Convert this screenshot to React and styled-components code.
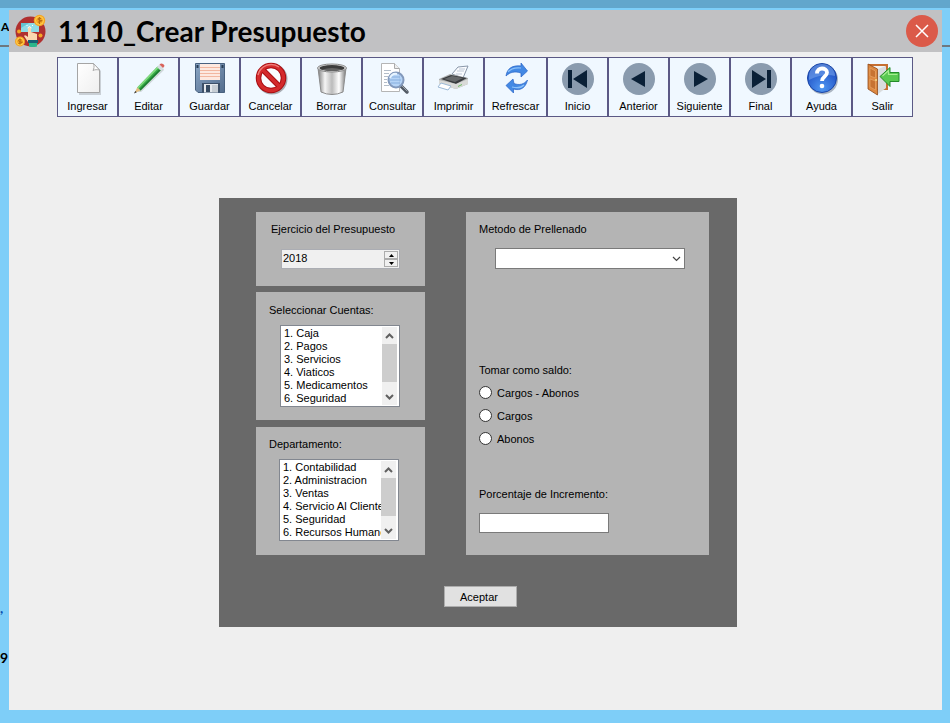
import React from "react";
import styled, { createGlobalStyle } from "styled-components";

const GlobalStyle = createGlobalStyle`
  *, *::before, *::after { box-sizing: border-box; }
  body {
    margin: 0;
    background: #7ecef8;
    color: #000;
    font: 11px/16px "Liberation Sans", Arial, sans-serif;
  }
  button, input, select { font: inherit; color: inherit; margin: 0; }
`;

const Desktop = styled.div`
  display: grid;
  grid-template-columns: 9px minmax(0, 1fr) 8px;
  min-height: 100vh;
  border-top: 8px solid #62a6cc;
  padding: 2px 0 13px;
`;

const Gutter = styled.div`
  display: flex;
  flex-direction: column;
  overflow: hidden;
  font: bold 14px/16px Lato, sans-serif;
`;

const GutterTop = styled.div`
  height: 37px;
  padding: 9px 0 0 1px;
  border-bottom: 2px solid #6d7880;
  font-size: 12px;
`;

const GutterBottom = styled.div`
  display: flex;
  flex-direction: column;
  margin-top: auto;
  padding-bottom: 44px;
`;

const GutterMark = styled.span`
  height: 50px;
  color: #0a4fae;
`;

const Window = styled.main`
  background: #efefef;
`;

const TitleBar = styled.header`
  display: flex;
  align-items: center;
  height: 42px;
  padding: 0 4px 0 5px;
  background: #c1c1c3;
`;

const Title = styled.h1`
  flex: 1;
  margin: 0 0 0 10px;
  font: bold 28px/36px "Century Gothic", Lato, sans-serif;
`;

const CloseButton = styled.button`
  display: flex;
  padding: 0;
  border: 0;
  border-radius: 50%;
  background: none;
`;

const Toolbar = styled.nav`
  display: flex;
  flex-wrap: wrap;
  margin: 5px 24px 0 48px;
`;

const ToolButton = styled.button`
  display: flex;
  flex-direction: column;
  align-items: center;
  gap: 2px;
  width: ${(p) => (p.$wide ? 63 : 61)}px;
  height: 60px;
  padding: 4px 0 0;
  border: 1px solid #5b5985;
  background: #f0f8ff;
  white-space: nowrap;
`;

const Panel = styled.form`
  margin: 81px 205px 0 210px;
  padding: 14px 28px 20px 37px;
  background: #696969;
`;

const Columns = styled.div`
  display: grid;
  grid-template-columns: minmax(0, 169fr) minmax(0, 243fr);
  gap: 41px;
`;

const Stack = styled.div`
  display: flex;
  flex-direction: column;
  gap: 6px;
  > :last-child { margin-top: auto; }
`;

const Box = styled.section`
  display: flex;
  flex-direction: column;
  align-items: stretch;
  padding: ${(p) => p.$pad || "10px 25px 13px 13px"};
  background: #b4b4b4;
`;

const Caption = styled.label`
  display: block;
  white-space: nowrap;
`;

const Spinner = styled.div`
  display: flex;
  height: 20px;
  margin: 12px 0 8px 10px;
  padding: 1px;
  border: 1px solid #abadb3;
  background: #f0f0f0;
`;

const SpinnerInput = styled.input`
  flex: 1;
  min-width: 0;
  padding: 0 0 1px;
  border: 0;
  background: none;
  line-height: 15px;
  appearance: textfield;
  &::-webkit-inner-spin-button { appearance: none; }
`;

const SpinnerArrows = styled.div`
  display: grid;
  grid-template-rows: 1fr 1fr;
  width: 14px;
`;

const ArrowButton = styled.button`
  display: flex;
  align-items: center;
  justify-content: center;
  padding: 0;
  border: 1px solid #acacac;
  background: #f0f0f0;
`;

const ListFrame = styled.div`
  display: flex;
  height: 82px;
  margin: 7px 0 0 ${(p) => p.$indent}px;
  border: 1px solid #828790;
  padding: 1px;
  background: #fff;
`;

const ListSelect = styled.select`
  flex: 1;
  min-width: 0;
  height: 78px;
  padding: 0;
  border: 0;
  border-radius: 0;
  outline: 0;
  background: #fff;
  overflow-y: auto;
  scrollbar-width: none;
  option {
    height: 13px;
    min-height: 13px;
    padding: 0 0 0 2px;
    line-height: 13px;
    white-space: pre;
  }
`;

const ScrollTrack = styled.div`
  display: flex;
  flex-direction: column;
  width: 15px;
  margin-right: 1px;
  background: #f0f0f0;
`;

const ScrollButton = styled.button`
  display: flex;
  align-items: center;
  justify-content: center;
  height: 17px;
  padding: 0;
  border: 0;
  background: #f0f0f0;
`;

const ScrollThumb = styled.div`
  height: 38px;
  margin-bottom: auto;
  background: #cdcdcd;
`;

const Combo = styled.div`
  display: grid;
  align-items: center;
  margin: 11px 0 0 16px;
  > * { grid-area: 1 / 1; }
  > svg { justify-self: end; margin-right: 4px; pointer-events: none; }
`;

const ComboSelect = styled.select`
  width: 100%;
  height: 21px;
  padding: 0 20px 0 4px;
  border: 1px solid #7a7a7a;
  border-radius: 0;
  background: #fff;
  appearance: none;
`;

const RadioGroup = styled.fieldset`
  display: flex;
  flex-direction: column;
  gap: 7px;
  margin: 93px 0 0;
  padding: 0;
  border: 0;
`;

const Legend = styled.legend`
  padding: 0;
  margin-bottom: 7px;
`;

const RadioLabel = styled.label`
  display: flex;
  align-items: flex-start;
  gap: 5px;
`;

const Radio = styled.input`
  width: 13px;
  height: 13px;
  border: 1px solid #333;
  border-radius: 50%;
  background: #fff;
  appearance: none;
  && { margin-top: 1px; }
  &:checked { box-shadow: inset 0 0 0 3px #fff; background: #333; }
`;

const Percent = styled.div`
  display: flex;
  flex-direction: column;
  gap: 11px;
  margin-top: 39px;
`;

const TextField = styled.input`
  width: 63%;
  height: 20px;
  margin-bottom: 9px;
  padding: 0 4px;
  border: 1px solid #7a7a7a;
  background: #fff;
`;

const Actions = styled.div`
  display: flex;
  justify-content: center;
  margin: 31px 4px 0 0;
`;

const AcceptButton = styled.button`
  width: 73px;
  height: 21px;
  padding: 0 3px 0 0;
  border: 1px solid #adadad;
  background: #e1e1e1;
`;

const Icon = ({ children }) => (
  <svg width="34" height="34" viewBox="0 0 34 34" aria-hidden="true">{children}</svg>
);

const Disc = ({ children }) => (
  <Icon>
    <circle cx="17" cy="17" r="16" fill="#8a9bae" />
    <g fill="#0a2037">{children}</g>
  </Icon>
);

const NewIcon = () => (
  <Icon>
    <defs>
      <linearGradient id="page" x1="0" y1="0" x2="1" y2="1">
        <stop offset="0" stopColor="#fff" /><stop offset="1" stopColor="#efefef" />
      </linearGradient>
    </defs>
    <path d="M8 2h15l7 7v24H8z" fill="#b9bfc5" opacity=".7" />
    <path d="M6.500 1.500h16l6 6.500v22.500h-22z" fill="url(#page)" stroke="#a5a5a5" />
    <path d="M22.500 1.500c1 3 .5 5-.5 7 2-1 4-1 6.500-.5z" fill="#fff" stroke="#aaa" />
  </Icon>
);

const EditIcon = () => (
  <Icon>
    <path d="M5 30 31 6l1 2L9 30z" fill="#9aa6a0" opacity=".4" />
    <path d="M5.200 25.500 25.500 4.500l3.500 3.500L8.500 28.500z" fill="#35a845" />
    <path d="M5.200 25.500 25.500 4.500l1.200 1.200L6.500 26.500z" fill="#83dc80" />
    <path d="m7.500 27.500 20.300-20.600 1.200 1.100L8.500 28.500z" fill="#1b7a30" />
    <path d="m2.500 31 2.700-5.500 3.300 3z" fill="#e3bd7e" /><path d="m2 31.500 1.300-2.600 1.500 1.300z" fill="#333" />
    <path d="m25 5 2.500-2.500 3.500 3.500L28.500 8.500z" fill="#d6dce0" />
    <path d="m27.500 2.500 1.500-1q3 0 3.500 2.500L31 6z" fill="#d8635b" />
  </Icon>
);

const SaveIcon = () => (
  <Icon>
    <defs>
      <linearGradient id="disk" x1="0" y1="0" x2="1" y2="1">
        <stop offset="0" stopColor="#8ba6c4" /><stop offset="1" stopColor="#526c8d" />
      </linearGradient>
    </defs>
    <path d="M2.500 1.500h29v29H5l-2.500-2.500z" fill="url(#disk)" stroke="#48617f" />
    <path d="M7 2h20v16H7z" fill="#fde9e0" />
    <path d="M7 5.500h20M7 8.500h20M7 11.500h20M7 14.500h20" stroke="#f2b7a0" />
    <path d="M3.500 3h2v3h-2zM28.500 3h2v3h-2z" fill="#263c55" />
    <path d="M9 21h18v9.500H9z" fill="#3d5068" /><path d="M11 22h14v8.500H11z" fill="#e5e9ed" />
    <path d="M13 23h4v7h-4z" fill="#364a61" /><path d="M19 23h6v7h-6z" fill="#c7ced4" />
  </Icon>
);

const CancelIcon = () => (
  <Icon>
    <circle cx="18" cy="17" r="13" fill="none" stroke="#a9adb3" strokeWidth="5" />
    <circle cx="17" cy="16" r="12.500" fill="#fafcff" stroke="#a90e12" strokeWidth="5.500" />
    <path d="m8 7 18 18" stroke="#a90e12" strokeWidth="5.500" />
    <circle cx="17" cy="16" r="12.500" fill="none" stroke="#d42a2c" strokeWidth="3.500" />
    <path d="m8 7 18 18" stroke="#d42a2c" strokeWidth="3.500" />
    <path d="M4 13A13.500 13.500 0 0 1 25 5" fill="none" stroke="#ee7d78" strokeWidth="1.500" />
  </Icon>
);

const TrashIcon = () => (
  <Icon>
    <defs>
      <linearGradient id="can">
        <stop offset="0" stopColor="#7d7d7d" /><stop offset=".25" stopColor="#f5f5f5" />
        <stop offset=".5" stopColor="#bbb" /><stop offset=".75" stopColor="#fff" /><stop offset="1" stopColor="#777" />
      </linearGradient>
    </defs>
    <path d="M3 6 6 30q11 5 22 0l3-24z" fill="url(#can)" stroke="#8b8b8b" />
    <ellipse cx="17" cy="6" rx="14.500" ry="4" fill="#ddd" stroke="#888" />
    <ellipse cx="17" cy="6" rx="12.500" ry="3" fill="#3c3c3c" />
    <path d="M7 7.500q10-3 20 0-10 3-20 0" fill="#656565" />
  </Icon>
);

const SearchIcon = () => (
  <Icon>
    <path d="M5.500 1.500h13l5 5v23h-18z" fill="#fff" stroke="#b5b5b5" />
    <path d="M18.500 1.500v5h5" fill="#eee" stroke="#aaa" />
    <path d="M8 8.500h7M8 11.500h5M8 14.500h4M8 17.500h3M8 20.500h3M8 23.500h5" stroke="#b3bdc9" />
    <path d="m25 24 6 6" stroke="#525a64" strokeWidth="3.500" strokeLinecap="round" />
    <path d="m25 23 6 6" stroke="#9da4ad" strokeLinecap="round" />
    <circle cx="20" cy="18" r="7.500" fill="#a9cdf4" fillOpacity=".85" stroke="#8299bc" strokeWidth="2" />
    <path d="M15 15h9M14 18h11M15 21h9" stroke="#86aede" />
    <path d="M14 16q2-5 7-4" fill="none" stroke="#e8f5ff" strokeWidth="2" />
  </Icon>
);

const PrintIcon = () => (
  <Icon>
    <path d="m15 12 6-7 10-1-5 12z" fill="#fafcff" stroke="#8997a9" />
    <path d="M20 9h7M19 12h6M22 7h6" stroke="#bec8d6" />
    <path d="m2 17 11-5 18 4v6l-12 5L2 22z" fill="#aeb0b0" />
    <path d="m4 17 10-4 16 3-11 6z" fill="#383b3e" />
    <path d="m7 17 8-3 11 2-8 4z" fill="#66696b" />
    <path d="m2 18 17 4v5L2 22zM19 22l12-5v5l-12 5z" fill="#d9dad8" />
    <path d="m21 24 4-2v1l-4 2z" fill="#6ebe63" />
    <path d="m4 21 10 3-3 4-10-3z" fill="#fff" stroke="#9dbad7" />
  </Icon>
);

const RefreshIcon = () => (
  <Icon>
    <g stroke="#2863c5" strokeWidth=".7" fill="#4389e4">
      <path d="M7 14C8 6 14 3 22 4V1l6.500 8L22 15v-4C16 9 11 10 7 14z" />
      <path d="M28.500 18c-2 8-7 11-14 9v4L7 23.500l7-6.500 1 4.500c5 2 10 1 13.500-3.500z" />
    </g>
    <path d="M9 10q4-5 13-4M25 23q-4 4-12 2" stroke="#8dc2fa" strokeWidth="1.200" fill="none" />
  </Icon>
);

const FirstIcon = () => <Disc><path d="M7 8h4v18H7zM26 8v18L12 17z" /></Disc>;
const PrevIcon = () => <Disc><path d="M23 9v16L9 17z" /></Disc>;
const NextIcon = () => <Disc><path d="M11 9v16l14-8z" /></Disc>;
const LastIcon = () => <Disc><path d="M23 8h4v18h-4zM8 8v18l14-9z" /></Disc>;

const HelpIcon = () => (
  <Icon>
    <defs>
      <radialGradient id="help" cx=".5" cy=".85" r=".9">
        <stop offset="0" stopColor="#4f97f2" /><stop offset=".7" stopColor="#2456c8" /><stop offset="1" stopColor="#1c48aa" />
      </radialGradient>
    </defs>
    <circle cx="18" cy="17.500" r="15" fill="#aab4c1" />
    <circle cx="17" cy="16" r="14.500" fill="url(#help)" stroke="#1945a7" />
    <path d="M4 14a13 12 0 0 1 26 0q-12-3-26 4z" fill="#7ba9ee" opacity=".55" />
    <path d="M12 11.500c0-7 10-6 10-1 0 4-5 4-5 8.500" fill="none" stroke="#fff" strokeWidth="3.800" />
    <circle cx="17" cy="24" r="2.300" fill="#fff" />
  </Icon>
);

const ExitIcon = () => (
  <Icon>
    <path d="M2 2h20v26h-8L2 26z" fill="#c66f31" /><path d="M5 4h14v23H5z" fill="#f3f3f1" />
    <path d="m12 7 8-3v22l-8 6z" fill="#d9dcde" />
    <path d="m2 2 9.500 5v26L2 27z" fill="#dc8840" stroke="#8f491b" strokeWidth=".8" />
    <path d="m4 6 5.500 3v7L4 14zm0 11 5.500 2v9L4 25z" fill="#c77332" stroke="#e9a669" strokeWidth=".7" />
    <circle cx="10" cy="18" r="1" fill="#f4df8a" />
    <path d="m14 14.500 10-9v5h9v9h-9v5z" fill="#59c951" stroke="#238b2a" />
    <path d="m16.500 14 6-5.500v4h9" fill="none" stroke="#a7ed91" strokeWidth="1.200" />
  </Icon>
);

const BudgetLogo = () => (
  <svg width="34" height="34" viewBox="0 0 34 34" aria-hidden="true">
    <circle cx="16.500" cy="17.500" r="15" fill="#b0302f" />
    <path d="M7 9h18v9H7z" fill="#8edbe5" /><path d="M7 9h8l-8 5z" fill="#64c2d1" />
    <path d="M14 14v9q-3-3-4-1l4 6h9v-8l-6-2v-4q-2-2-3 0z" fill="#fbd8b0" />
    <path d="M13.500 14q2-3 4 0M12.500 11l1 1M19 11l-1 1" stroke="#fff" fill="none" />
    <path d="M14 26h10v3H14z" fill="#175f75" /><path d="M15 29h8v3.500q-4 1-8 0z" fill="#2bb58b" />
    <g fill="#f5a524">
      <circle cx="25.500" cy="6.500" r="5.700" /><circle cx="6" cy="27.500" r="5" />
      <circle cx="5" cy="17.500" r="2" /><circle cx="26.500" cy="21.500" r="2" />
    </g>
    <g fill="none" stroke="#ffd452">
      <circle cx="25.500" cy="6.500" r="4" /><circle cx="6" cy="27.500" r="3.500" />
    </g>
    <path d="M27 4.500q-3-1-3 .5t3 1.500-3 1.700M25.500 3v7M7.500 26q-3-1-3 .5t3 1.500-3 1.500M6 24.500v6" stroke="#b66b11" fill="none" />
  </svg>
);

const CloseIcon = () => (
  <svg width="32" height="32" viewBox="0 0 32 32" aria-hidden="true">
    <circle cx="16" cy="16" r="16" fill="#db5a49" />
    <path d="m10 10 12 12M22 10 10 22" stroke="#fff" strokeWidth="1.500" />
  </svg>
);

const Chevron = ({ up, thin }) => (
  <svg width="9" height="6" viewBox="0 0 9 6" aria-hidden="true">
    <path d={up ? "M1 5l3.500-3.500L8 5" : "M1 1l3.500 3.500L8 1"} fill="none" stroke={thin ? "#444" : "#606060"} strokeWidth={thin ? 1.2 : 2} />
  </svg>
);

const Triangle = ({ up }) => (
  <svg width="5" height="3" viewBox="0 0 5 3" aria-hidden="true">
    <path d={up ? "M0 3h5L2.500 0z" : "M0 0h5L2.500 3z"} />
  </svg>
);

const tools = [
  ["Ingresar", NewIcon], ["Editar", EditIcon], ["Guardar", SaveIcon], ["Cancelar", CancelIcon],
  ["Borrar", TrashIcon], ["Consultar", SearchIcon], ["Imprimir", PrintIcon], ["Refrescar", RefreshIcon],
  ["Inicio", FirstIcon], ["Anterior", PrevIcon], ["Siguiente", NextIcon], ["Final", LastIcon],
  ["Ayuda", HelpIcon], ["Salir", ExitIcon],
];

const accounts = ["1. Caja", "2. Pagos", "3. Servicios", "4. Viaticos", "5. Medicamentos", "6. Seguridad"];
const departments = ["1. Contabilidad", "2. Administracion", "3. Ventas", "4. Servicio Al Cliente", "5. Seguridad", "6. Recursos Humanos"];
const balances = ["Cargos - Abonos", "Cargos", "Abonos"];

const ListBox = ({ id, items, indent }) => (
  <ListFrame $indent={indent}>
    <ListSelect id={id} size={6}>
      {items.map((item) => <option key={item}>{item}</option>)}
    </ListSelect>
    <ScrollTrack>
      <ScrollButton type="button" aria-label="Subir"><Chevron up /></ScrollButton>
      <ScrollThumb />
      <ScrollButton type="button" aria-label="Bajar"><Chevron /></ScrollButton>
    </ScrollTrack>
  </ListFrame>
);

export default function App() {
  return (
    <>
      <GlobalStyle />
      <Desktop>
        <Gutter>
          <GutterTop>A</GutterTop>
          <GutterBottom>
            <GutterMark>,</GutterMark>
            <span>9</span>
          </GutterBottom>
        </Gutter>
        <Window>
          <TitleBar>
            <BudgetLogo />
            <Title>1110_Crear Presupuesto</Title>
            <CloseButton type="button" aria-label="Cerrar"><CloseIcon /></CloseButton>
          </TitleBar>
          <Toolbar>
            {tools.map(([name, Glyph]) => (
              <ToolButton key={name} type="button" $wide={name === "Refrescar"}>
                <Glyph />
                {name}
              </ToolButton>
            ))}
          </Toolbar>
          <Panel onSubmit={(e) => e.preventDefault()}>
            <Columns>
              <Stack>
                <Box $pad="9px 25px 9px 15px">
                  <Caption htmlFor="year">Ejercicio del Presupuesto</Caption>
                  <Spinner>
                    <SpinnerInput id="year" type="number" defaultValue="2018" />
                    <SpinnerArrows>
                      <ArrowButton type="button" aria-label="Aumentar"><Triangle up /></ArrowButton>
                      <ArrowButton type="button" aria-label="Disminuir"><Triangle /></ArrowButton>
                    </SpinnerArrows>
                  </Spinner>
                </Box>
                <Box>
                  <Caption htmlFor="accounts">Seleccionar Cuentas:</Caption>
                  <ListBox id="accounts" items={accounts} indent={11} />
                </Box>
                <Box $pad="9px 26px 14px 13px">
                  <Caption htmlFor="departments">Departamento:</Caption>
                  <ListBox id="departments" items={departments} indent={10} />
                </Box>
              </Stack>
              <Box $pad="9px 24px 13px 13px">
                <Caption htmlFor="method">Metodo de Prellenado</Caption>
                <Combo>
                  <ComboSelect id="method" defaultValue=""><option value="" /></ComboSelect>
                  <Chevron thin />
                </Combo>
                <RadioGroup>
                  <Legend>Tomar como saldo:</Legend>
                  {balances.map((name) => (
                    <RadioLabel key={name}>
                      <Radio type="radio" name="balance" value={name} />
                      {name}
                    </RadioLabel>
                  ))}
                </RadioGroup>
                <Percent>
                  <Caption htmlFor="percent">Porcentaje de Incremento:</Caption>
                  <TextField id="percent" type="text" />
                </Percent>
              </Box>
            </Columns>
            <Actions>
              <AcceptButton type="submit">Aceptar</AcceptButton>
            </Actions>
          </Panel>
        </Window>
        <Gutter>
          <GutterTop />
        </Gutter>
      </Desktop>
    </>
  );
}
